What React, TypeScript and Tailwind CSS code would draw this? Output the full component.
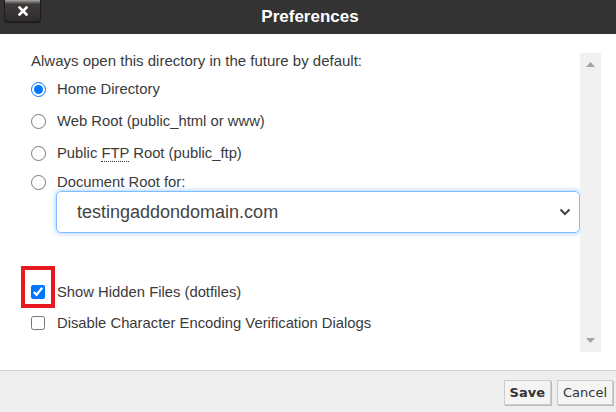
import React, { useState } from 'react';

const SANS = { fontFamily: '"Liberation Sans", Arial, sans-serif' };
const VERDANA = { fontFamily: '"DejaVu Sans", Verdana, sans-serif' };

export default function App() {
  const [dir, setDir] = useState('home');
  const [showHidden, setShowHidden] = useState(true);
  const [disableEnc, setDisableEnc] = useState(false);

  const radios = [
    { id: 'home', label: <>Home Directory</>, mt: 'mt-[9px]' },
    { id: 'web', label: <>Web Root (public_html or www)</>, mt: 'mt-[14px]' },
    {
      id: 'ftp',
      label: (
        <>
          Public <abbr className="no-underline border-b border-dotted border-[#333]">FTP</abbr> Root (public_ftp)
        </>
      ),
      mt: 'mt-[14px]',
    },
    { id: 'doc', label: <>Document Root for:</>, mt: 'mt-[11px]' },
  ];

  return (
    <div className="w-[616px] h-[412px] flex flex-col bg-white overflow-hidden" style={SANS}>
      {/* title bar */}
      <div className="relative h-[34px] shrink-0 bg-[#333333] flex items-center justify-center">
        <button className="absolute left-[4px] top-0 w-[37px] h-[22px] rounded-b-[4px] border border-t-0 border-[#1e1e1e] bg-gradient-to-b from-[#a8a8a8] via-[#3f3b39] via-20% to-[#2f2c2b] shadow-[0_1px_1px_rgba(0,0,0,0.5)] flex items-center justify-center">
          <svg width="10" height="10" viewBox="0 0 10 10">
            <path d="M1.5 1.5 L8.5 8.5 M8.5 1.5 L1.5 8.5" stroke="#fff" strokeWidth="2.6" strokeLinecap="square" />
          </svg>
        </button>
        <div className="text-white font-bold text-[17px] ml-[4px]">Preferences</div>
      </div>

      {/* body */}
      <div className="flex-1 flex min-h-0">
        <div className="flex-1 flex flex-col pl-[31px] pt-[17px] text-[14.8px] text-[#3a3a3a]">
          <div className="h-[20px] leading-[20px] text-[15px]">Always open this directory in the future by default:</div>

          {radios.map(r => (
            <label key={r.id} className={`${r.mt} h-[18px] flex items-center cursor-pointer`}>
              <input
                type="radio"
                name="dir"
                checked={dir === r.id}
                onChange={() => setDir(r.id)}
                className="w-[15px] h-[15px] m-0 accent-[#0075ff]"
              />
              <span className="ml-[11px] leading-[18px]">{r.label}</span>
            </label>
          ))}

          <div className="ml-[25px] h-[42px] rounded-[5px] border border-[#80bdff] shadow-[0_0_4px_1px_rgba(0,123,255,0.3)] flex items-center justify-between pl-[20px] pr-[8px] text-[18px] text-[#444]">
            <span>testingaddondomain.com</span>
            <svg width="12" height="8" viewBox="0 0 12 8">
              <path d="M1.5 1.5 L6 6 L10.5 1.5" stroke="#444" strokeWidth="2" fill="none" />
            </svg>
          </div>

          <div className="relative mt-[50px]">
            <div className="absolute left-[-10px] top-[-17px] w-[34px] h-[42px] border-[4px] border-[#e5191f] pointer-events-none" />
            <label className="h-[18px] flex items-center cursor-pointer">
              <input
                type="checkbox"
                checked={showHidden}
                onChange={e => setShowHidden(e.target.checked)}
                className="w-[14px] h-[14px] m-0 accent-[#0075ff]"
              />
              <span className="ml-[12px] leading-[18px]">Show Hidden Files (dotfiles)</span>
            </label>
          </div>
          <label className="mt-[13px] h-[18px] flex items-center cursor-pointer">
            <input
              type="checkbox"
              checked={disableEnc}
              onChange={e => setDisableEnc(e.target.checked)}
              className="w-[14px] h-[14px] m-0"
            />
            <span className="ml-[12px] leading-[18px]">Disable Character Encoding Verification Dialogs</span>
          </label>
        </div>

        {/* scrollbar */}
        <div className="w-[21px] mt-[19px] mb-[18px] mr-[15px] bg-[#f1f1f1] flex flex-col items-center justify-between py-[9px]">
          <svg width="9" height="5" viewBox="0 0 9 5"><path d="M0 5 L4.5 0 L9 5 Z" fill="#a3a3a3" /></svg>
          <svg width="9" height="5" viewBox="0 0 9 5"><path d="M0 0 L4.5 5 L9 0 Z" fill="#a3a3a3" /></svg>
        </div>
      </div>

      {/* footer */}
      <div className="h-[42px] shrink-0 border-t border-[#cfcfcf] bg-[#eeeeee] flex items-start justify-end gap-[6px] pt-[9px] pr-[3px]" style={VERDANA}>
        <button className="h-[25px] px-[5px] text-[13px] font-bold text-[#333] bg-[#f4f4f4] border border-[#cccccc] shadow-[1px_1px_0_#bbb]">Save</button>
        <button className="h-[25px] px-[5px] text-[13px] text-[#333] bg-[#f4f4f4] border border-[#cccccc] shadow-[1px_1px_0_#bbb]">Cancel</button>
      </div>
    </div>
  );
}
